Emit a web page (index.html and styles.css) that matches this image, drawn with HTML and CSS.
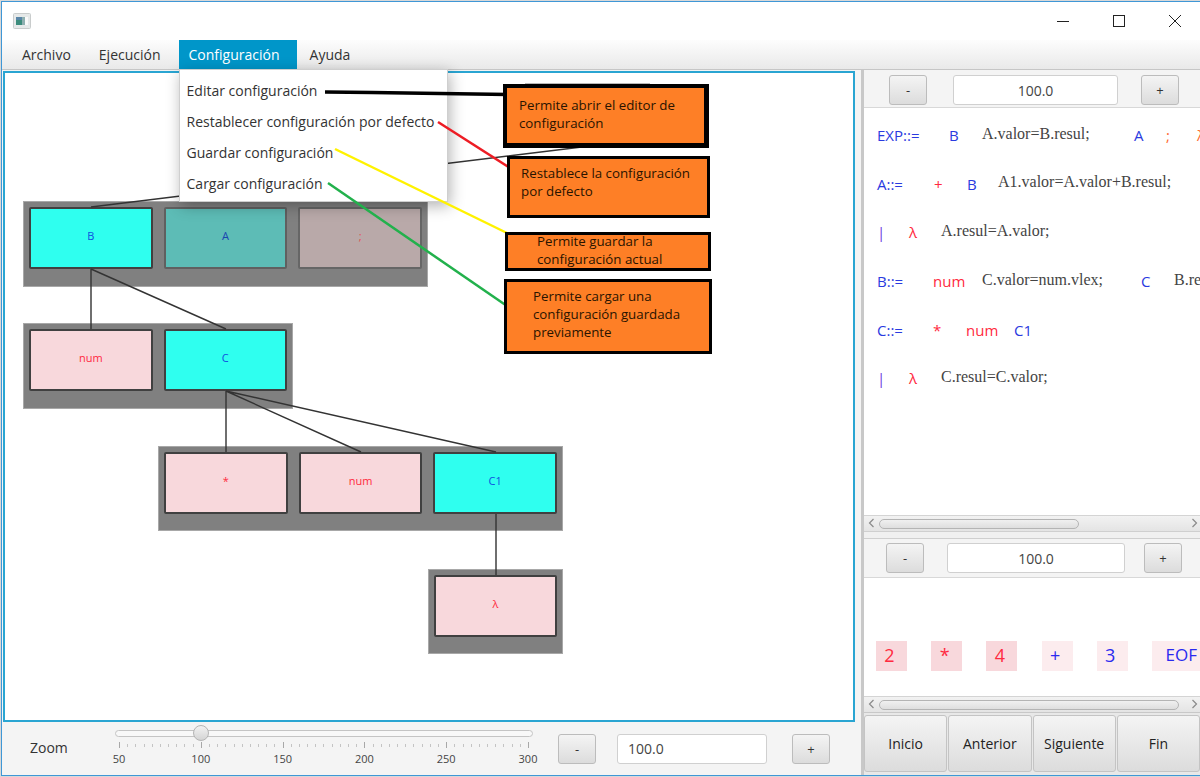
FILE: index.html
```html
<html>
<head><title>Gramatica</title>
<link rel="stylesheet" href="styles.css">
</head>
<body>
<div class="window">
	<div class="titlebar">
		<svg class="appicon" width="18" height="16" viewBox="0 0 18 16">
			<rect x="0.5" y="0.5" width="17" height="15" rx="1" fill="#e6e9e9" stroke="#c9cccc"/>
			<rect x="3" y="4" width="6" height="8" fill="#3c8c7c"/>
			<rect x="3" y="4" width="6" height="3" fill="#5a86a8"/>
			<rect x="9" y="4" width="3" height="8" fill="#8fb0b0"/>
			<rect x="12" y="4" width="3" height="8" fill="#fafafa"/>
		</svg>
		<div class="winbuttons">
			<svg width="14" height="14" viewBox="0 0 14 14"><path d="M1 7.5H13" stroke="#222" stroke-width="1"/></svg>
			<svg width="14" height="14" viewBox="0 0 14 14"><rect x="1.5" y="1.5" width="11" height="11" fill="none" stroke="#222" stroke-width="1"/></svg>
			<svg width="14" height="14" viewBox="0 0 14 14"><path d="M1 1L13 13M13 1L1 13" stroke="#222" stroke-width="1"/></svg>
		</div>
	</div>

	<div class="menubar">
		<div class="menu">Archivo</div>
		<div class="menu">Ejecución</div>
		<div class="menu open">Configuración
			<div class="popup">
				<div class="popup-item">Editar configuración</div>
				<div class="popup-item">Restablecer configuración por defecto</div>
				<div class="popup-item">Guardar configuración</div>
				<div class="popup-item">Cargar configuración</div>
			</div>
		</div>
		<div class="menu">Ayuda</div>
	</div>

	<div class="main">
		<div class="left">
			<div class="canvas">
				<div class="root-edge"></div>
				<svg class="edges" width="848" height="647" viewBox="5 73 848 647">
					<path d="M91 207L590 146M91 269V329M91 269L226 329M226 391V452M226 391L361 452M226 391L496 452M496 514V575" stroke="#333" stroke-width="1.4" fill="none"/>
				</svg>
				<div class="group g1">
					<div class="node nt">B</div>
					<div class="node nt dim-a">A</div>
					<div class="node tk dim-b">;</div>
				</div>
				<div class="group g2">
					<div class="node tk">num</div>
					<div class="node nt">C</div>
				</div>
				<div class="group g3">
					<div class="node tk">*</div>
					<div class="node tk">num</div>
					<div class="node nt">C1</div>
				</div>
				<div class="group g4">
					<div class="node tk">λ</div>
				</div>
			</div>
			<div class="zoombar">
				<div class="zoomlabel">Zoom</div>
				<div class="slider">
					<div class="track"></div>
					<div class="thumb"></div>
					<div class="ticks"></div>
					<div class="marks">
						<span>50</span><span>100</span><span>150</span><span>200</span><span>250</span><span>300</span>
					</div>
				</div>
				<div class="btn btn-minus">-</div>
				<div class="field field-left">100.0</div>
				<div class="btn btn-plus">+</div>
			</div>
		</div>

		<div class="right">
			<div class="toolbar tb-top">
				<div class="btn">-</div>
				<div class="field">100.0</div>
				<div class="btn">+</div>
			</div>
			<div class="grammar">
				<div class="rule">
					<span class="nt-t w72">EXP::=</span><span class="nt-t w33">B</span><span class="code w152">A.valor=B.resul;</span><span class="nt-t w32">A</span><span class="tk-t orange w31">;</span><span class="tk-t orange">λ</span>
				</div>
				<div class="rule">
					<span class="nt-t w57">A::=</span><span class="tk-t w33">+</span><span class="nt-t w31">B</span><span class="code">A1.valor=A.valor+B.resul;</span>
				</div>
				<div class="rule">
					<span class="pipe w32">|</span><span class="tk-t w32">λ</span><span class="code">A.resul=A.valor;</span>
				</div>
				<div class="rule">
					<span class="nt-t w56">B::=</span><span class="tk-t w49">num</span><span class="code w159">C.valor=num.vlex;</span><span class="nt-t w33">C</span><span class="code">B.resul=C.resul;</span>
				</div>
				<div class="rule">
					<span class="nt-t w56">C::=</span><span class="tk-t w33">*</span><span class="tk-t w48">num</span><span class="nt-t">C1</span>
				</div>
				<div class="rule">
					<span class="pipe w32">|</span><span class="tk-t w32">λ</span><span class="code">C.resul=C.valor;</span>
				</div>
			</div>
			<div class="hscroll">
				<svg class="chev" width="7" height="10" viewBox="0 0 7 10"><path d="M5.5 1L1.5 5L5.5 9" fill="none" stroke="#8a8a8a" stroke-width="1.2"/></svg>
				<div class="sthumb s-short"></div>
				<svg class="chev chev-r" width="7" height="10" viewBox="0 0 7 10"><path d="M1.5 1L5.5 5L1.5 9" fill="none" stroke="#8a8a8a" stroke-width="1.2"/></svg>
			</div>
			<div class="divider"></div>
			<div class="toolbar tb-low">
				<div class="btn">-</div>
				<div class="field">100.0</div>
				<div class="btn">+</div>
			</div>
			<div class="input">
				<div class="cell red">2</div>
				<div class="cell red">*</div>
				<div class="cell red">4</div>
				<div class="cell pale">+</div>
				<div class="cell pale">3</div>
				<div class="cell pale eof">EOF</div>
			</div>
			<div class="hscroll">
				<svg class="chev" width="7" height="10" viewBox="0 0 7 10"><path d="M5.5 1L1.5 5L5.5 9" fill="none" stroke="#8a8a8a" stroke-width="1.2"/></svg>
				<div class="sthumb s-long"></div>
				<svg class="chev chev-r" width="7" height="10" viewBox="0 0 7 10"><path d="M1.5 1L5.5 5L1.5 9" fill="none" stroke="#8a8a8a" stroke-width="1.2"/></svg>
			</div>
			<div class="steps">
				<div class="step">Inicio</div>
				<div class="step">Anterior</div>
				<div class="step">Siguiente</div>
				<div class="step">Fin</div>
			</div>
		</div>
	</div>
</div>

<!-- notas pegadas encima de la captura -->
<svg class="arrows" width="1200" height="777">
	<path d="M325 92L372 92.5L508 94.5" stroke="#000" stroke-width="3.5" fill="none"/>
	<path d="M438 122L510 168" stroke="#ed1c24" stroke-width="2.5" fill="none"/>
	<path d="M335 149L509 234" stroke="#fff200" stroke-width="2.5" fill="none"/>
	<path d="M328 183L507 306" stroke="#22b14c" stroke-width="2.5" fill="none"/>
</svg>
<div class="note n1">Permite abrir el editor de<br>configuración</div>
<div class="note n2">Restablece la configuración<br>por defecto</div>
<div class="note n3"><div class="n3-text">Permite guardar la<br>configuración actual</div></div>
<div class="note n4">Permite cargar una<br>configuración guardada<br>previamente</div>
</body>
</html>
```
FILE: styles.css
```css
body {
	margin:0px;
	width:1200px;
	height:777px;
	overflow:hidden;
	position:relative;
	background-color:#d8d8d8;
	font-family:"Open Sans", sans-serif;
	color:#333;
}

.window {
	margin:1px 0px 0px 1px;
	width:1199px;
	height:775px;
	border-top:1px solid #3f97d6;
	border-left:1px solid #3f97d6;
	border-bottom:1px solid #3f97d6;
	box-sizing:border-box;
	background-color:#f4f4f4;
	display:flex;
	flex-direction:column;
}

/* title */
.titlebar {
	height:38px;
	flex:none;
	background-color:#fff;
	display:flex;
	align-items:center;
	justify-content:space-between;
	padding:0px 18px 0px 11px;
}
.appicon { margin-top:-1px; }
.winbuttons {
	display:flex;
	gap:42px;
	margin-top:-1px;
}

/* menu */
.menubar {
	height:30px;
	flex:none;
	box-sizing:border-box;
	background:linear-gradient(#fdfdfd, #e9e9e9);
	border-bottom:1px solid #c6c6c6;
	display:flex;
	padding-left:10px;
	font-size:14px;
	position:relative;
	z-index:3;
}
.menu {
	padding:0px 10px;
	margin-right:8px;
	line-height:29px;
	position:relative;
}
.menu.open {
	background-color:#0096c9;
	color:#fff;
	width:118px;
	box-sizing:border-box;
	margin-right:3px;
}
.popup {
	position:absolute;
	top:29px;
	left:0px;
	width:269px;
	height:133px;
	box-sizing:border-box;
	background-color:#fff;
	border:1px solid #cfcfcf;
	box-shadow:2px 4px 14px rgba(0,0,0,0.3);
	padding-top:5px;
	color:#333;
}
.popup-item {
	height:31px;
	line-height:31px;
	padding-left:7px;
	white-space:nowrap;
}

/* left */
.main {
	flex:1;
	display:flex;
	min-height:0;
}
.left {
	width:858px;
	flex:none;
	display:flex;
	flex-direction:column;
}
.canvas {
	margin:1px 0px 0px 1px;
	width:852px;
	height:651px;
	flex:none;
	box-sizing:border-box;
	border:2px solid #2aa5d2;
	background-color:#fff;
	position:relative;
	overflow:hidden;
}
.edges {
	position:absolute;
	top:0px;
	left:0px;
	z-index:2;
}
.root-edge {
	position:absolute;
	left:520px;
	top:10px;
	width:125px;
	height:2px;
	background-color:#b8b8b8;
}
.group {
	position:absolute;
	background-color:#808080;
	outline:1px solid #a8a8a8;
	outline-offset:-1px;
	box-sizing:border-box;
	display:flex;
	gap:11px;
	padding:6px;
	height:86px;
}
.g1 { left:18px; top:128px; width:405px; }
.g2 { left:18px; top:250px; width:270px; }
.g3 { left:153px; top:373px; width:405px; height:85px; }
.g4 { left:423px; top:496px; width:135px; height:85px; }
.node {
	width:124px;
	height:62px;
	box-sizing:border-box;
	border:2px solid #404040;
	border-radius:2px;
	display:flex;
	align-items:center;
	justify-content:center;
	font-size:11px;
	padding-bottom:6px;
}
.node.nt {
	background-color:#2fffef;
	color:#1050e0;
}
.node.tk {
	background-color:#f8d8dc;
	color:#ff2a40;
}
.node.dim-a {
	background-color:#5dbcb6;
	border-color:#606060;
	color:#1a45b0;
}
.node.dim-b {
	background-color:#b9a9a9;
	border-color:#666;
	color:#e05050;
}

/* zoom bar */
.zoombar {
	flex:1;
	position:relative;
	font-size:14px;
	display:flex;
	align-items:center;
	padding-left:28px;
}
.zoomlabel {
	width:85px;
	margin-top:-2px;
}
.slider {
	width:418px;
	height:50px;
	position:relative;
	flex:none;
	margin-top:-2px;
	font-size:11px;
	color:#444;
}
.track {
	position:absolute;
	top:7px;
	left:0px;
	right:0px;
	height:7px;
	box-sizing:border-box;
	background-color:#f8f8f8;
	border:1px solid #c4c4c4;
	border-radius:4px;
}
.thumb {
	position:absolute;
	left:78px;
	top:2px;
	width:16px;
	height:16px;
	box-sizing:border-box;
	border-radius:50%;
	border:1px solid #b4b4b4;
	background:linear-gradient(#f2f2f2, #d4d4d4);
}
.ticks {
	position:absolute;
	top:19px;
	left:4px;
	width:410px;
	height:6px;
	background:
		repeating-linear-gradient(90deg, #a8a8a8 0px, #a8a8a8 1px, transparent 1px, transparent 81.8px) 0 0 / 100% 6px no-repeat,
		repeating-linear-gradient(90deg, #c4c4c4 0px, #c4c4c4 1px, transparent 1px, transparent 8.18px) 0 2px / 100% 3px no-repeat;
}
.marks {
	position:absolute;
	top:28px;
	left:-12px;
	width:441px;
	display:flex;
	justify-content:space-between;
}
.marks span {
	width:32px;
	text-align:center;
}
.btn {
	width:38px;
	height:30px;
	flex:none;
	box-sizing:border-box;
	border:1px solid #bcbcbc;
	border-radius:3px;
	background:linear-gradient(#f4f4f4, #dcdcdc);
	display:flex;
	align-items:center;
	justify-content:center;
	font-size:13px;
	color:#333;
}
.btn-minus { margin-left:25px; }
.btn-plus { margin-left:25px; }
.field {
	height:30px;
	box-sizing:border-box;
	background-color:#fff;
	border:1px solid #d0d0d0;
	border-radius:3px;
	display:flex;
	align-items:center;
	justify-content:center;
	font-size:14px;
	color:#444;
}
.field-left {
	width:150px;
	margin-left:21px;
	justify-content:flex-start;
	padding-left:10px;
}

/* right */
.right {
	flex:1;
	min-width:0;
	display:flex;
	flex-direction:column;
	border-left:3px solid #c8c8c8;
	margin-left:1px;
	overflow:hidden;
}
.toolbar {
	flex:none;
	display:flex;
	align-items:center;
	box-sizing:border-box;
	border-bottom:1px solid #d8d8d8;
}
.tb-top {
	height:38px;
	padding:3px 0px 0px 25px;
	gap:26px;
}
.tb-top .field { width:165px; margin-right:-3px; }
.tb-low {
	height:39px;
	padding-left:22px;
	gap:23px;
}
.tb-low .field { width:178px; margin-right:-4px; }
.grammar {
	height:407px;
	flex:none;
	background-color:#fff;
	padding-top:3px;
	box-sizing:border-box;
	overflow:hidden;
}
.rule {
	height:48.6px;
	display:flex;
	align-items:center;
	padding-left:13px;
	white-space:nowrap;
	font-size:15px;
}
.rule span { flex:none; }
.nt-t { color:#2a3ae0; }
.tk-t { color:#ff2a40; }
.tk-t.orange { color:#ff6a30; }
.pipe { color:#6a3ae0; }
.code {
	font-family:"Liberation Serif", serif;
	font-size:16px;
	color:#444;
	margin-top:-3px;
}
.w31 { width:31px; }
.w32 { width:32px; }
.w33 { width:33px; }
.w48 { width:48px; }
.w49 { width:49px; }
.w56 { width:56px; }
.w57 { width:57px; }
.w72 { width:72px; }
.w152 { width:152px; }
.w159 { width:159px; }
.hscroll {
	height:16px;
	flex:none;
	box-sizing:border-box;
	background:linear-gradient(#f2f2f2, #e4e4e4);
	border-top:1px solid #d4d4d4;
	position:relative;
	display:flex;
	align-items:center;
	padding-left:15px;
}
.chev {
	position:absolute;
	left:4px;
	top:2px;
}
.chev-r {
	left:auto;
	right:2px;
}
.sthumb {
	height:10px;
	box-sizing:border-box;
	border:1px solid #b4b4b4;
	border-radius:5px;
	background:linear-gradient(#f0f0f0, #dedede);
}
.s-short { width:200px; }
.s-long { width:300px; }
.divider {
	height:8px;
	flex:none;
	background-color:#f0f0f0;
	border-top:1px solid #cfcfcf;
	border-bottom:1px solid #cfcfcf;
	box-sizing:border-box;
}
.input {
	height:118px;
	flex:none;
	background-color:#fff;
	display:flex;
	align-items:center;
	gap:24.2px;
	padding:38px 0px 0px 12px;
	box-sizing:border-box;
	overflow:hidden;
}
.cell {
	width:31px;
	height:30px;
	flex:none;
	display:flex;
	align-items:center;
	justify-content:center;
	font-size:18px;
	box-sizing:border-box;
	padding:0px 4px 3px 0px;
}
.cell.red {
	background-color:#f8d8dc;
	color:#ff2a40;
}
.cell.pale {
	background-color:#fcecee;
	color:#2a2af0;
}
.cell.eof {
	width:48px;
	justify-content:flex-end;
	padding-right:3px;
	font-size:17px;
}
.steps {
	flex:1;
	display:flex;
	gap:1px;
	padding-top:2px;
	background-color:#e8e8e8;
	border-top:1px solid #c8c8c8;
}
.step {
	flex:1;
	box-sizing:border-box;
	height:57px;
	border:1px solid #c4c4c4;
	border-radius:3px;
	background:linear-gradient(#f4f4f4, #dcdcdc);
	display:flex;
	align-items:center;
	justify-content:center;
	font-size:14px;
	color:#222;
}

/* notes */
.arrows {
	position:absolute;
	top:0px;
	left:0px;
	z-index:4;
}
.note {
	position:absolute;
	z-index:5;
	box-sizing:border-box;
	background-color:#fe7f26;
	border:3px solid #000;
	font-size:13.3px;
	line-height:18px;
	color:#2a1400;
	white-space:nowrap;
}
.n1 { left:503px; top:84px; width:206px; height:64px; border-width:4px 5px 5px 4px; padding:8px 0px 0px 12px; }
.n2 { left:507px; top:156px; width:203px; height:62px; padding:5px 0px 0px 11px; }
.n3 { left:505px; top:232px; width:206px; height:39px; padding:0px 0px 0px 29px; }
.n3-text { margin-top:-3px; }
.n4 { left:504px; top:279px; width:208px; height:75px; padding:5px 0px 0px 26px; }
```
